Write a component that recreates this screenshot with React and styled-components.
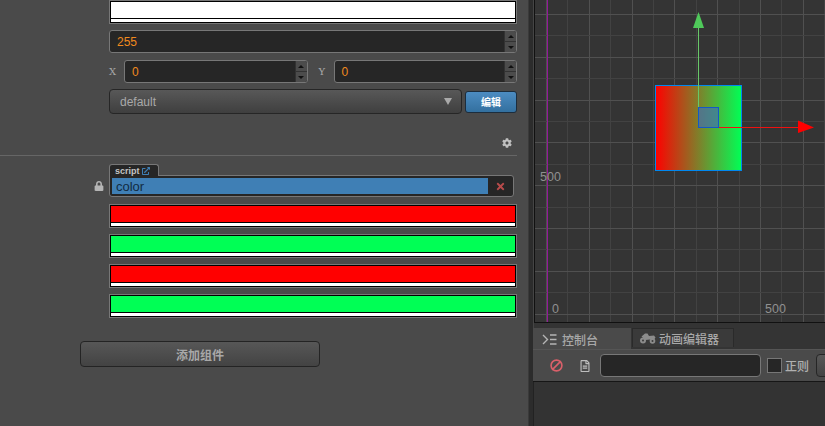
import React from 'react';
import styled, { createGlobalStyle } from 'styled-components';
import { FaCog, FaLock, FaTimes, FaExternalLinkAlt, FaRegFileAlt } from 'react-icons/fa';
import { Ban } from 'lucide-react';

const GlobalStyle = createGlobalStyle`
  html, body {
    margin: 0;
    padding: 0;
    background: #333;
    overflow: hidden;
  }
  body {
    font-family: "Liberation Sans", "Noto Sans CJK SC", sans-serif;
    font-size: 12px;
  }
`;

const Window = styled.div`
  display: flex;
  width: 825px;
  height: 426px;
  overflow: hidden;
`;

const Inspector = styled.div`
  width: 528px;
  height: 426px;
  flex: none;
  background: #4a4a4a;
  border-right: 1px solid #3a3a3a;
  display: flex;
  flex-direction: column;
`;

const Splitter = styled.div`
  width: 5px;
  flex: none;
  background: #2c2c2c;
  border-right: 1px solid #454545;
  box-sizing: border-box;
`;

const RightColumn = styled.div`
  flex: 1;
  min-width: 0;
  display: flex;
  flex-direction: column;
  background: #343434;
`;

const Props = styled.div`
  padding-left: 109px;
  width: 408px;
  display: flex;
  flex-direction: column;
`;

const Swatch = styled.div`
  box-sizing: border-box;
  width: 408px;
  height: 24px;
  border: 1px solid #777;
  background: #fff;
  margin-bottom: ${(p) => p.$gap ?? 6}px;
  outline: 1px solid #000;
  outline-offset: -2px;
  position: relative;
  &::before {
    content: '';
    display: block;
    height: 16px;
    margin: 1px 1px 0;
    background: ${(p) => p.$color};
    border-bottom: 1px solid #000;
  }
`;

const NumberBox = styled.div`
  box-sizing: border-box;
  flex: 1;
  height: 23px;
  display: flex;
  align-items: center;
  justify-content: space-between;
  background: #262626;
  border: 1px solid #777;
  border-radius: 3px;
  color: #f08a1e;
  font-size: 12px;
  padding-left: 7px;
  overflow: hidden;
`;

const Spinner = styled.div`
  width: 11px;
  height: 100%;
  flex: none;
  display: flex;
  flex-direction: column;
  background: #4c4c4c;
  border-left: 1px solid #333;
`;

const SpinPart = styled.div`
  flex: 1;
  display: flex;
  align-items: center;
  justify-content: center;
  &:first-child {
    border-bottom: 1px solid #333;
  }
  &::after {
    content: '';
    border-left: 3px solid transparent;
    border-right: 3px solid transparent;
    ${(p) => (p.$up ? 'border-bottom: 3px solid #111;' : 'border-top: 3px solid #111;')}
  }
`;

const NumberRow = styled.div`
  display: flex;
  align-items: center;
  height: 23px;
  margin-bottom: ${(p) => p.$gap}px;
`;

const AxisLabel = styled.span`
  width: 15px;
  flex: none;
  color: #a8a8a8;
  font-family: "DejaVu Serif", serif;
  font-size: 10px;
  margin-left: ${(p) => p.$left || 0}px;
`;

const SelectRow = styled.div`
  display: flex;
  align-items: center;
  gap: 3px;
  height: 25px;
`;

const Select = styled.div`
  box-sizing: border-box;
  width: 353px;
  height: 25px;
  display: flex;
  align-items: center;
  justify-content: space-between;
  padding: 0 9px 0 10px;
  border: 1px solid #262626;
  border-radius: 4px;
  background: linear-gradient(#585858, #3f3f3f);
  color: #a9a9a9;
  &::after {
    content: '';
    border-left: 4.5px solid transparent;
    border-right: 4.5px solid transparent;
    border-top: 7px solid #a9a9a9;
  }
`;

const EditButton = styled.button`
  box-sizing: border-box;
  width: 52px;
  height: 22px;
  padding: 0;
  border: 1px solid #1c2d3d;
  border-radius: 3px;
  background: linear-gradient(#4c8cc2, #33709f);
  color: #fff;
  font-family: inherit;
  font-size: 10px;
  font-weight: bold;
`;

const GearRow = styled.div`
  height: 16px;
  margin-top: 21px;
  width: 517px;
  display: flex;
  justify-content: flex-end;
  align-items: center;
  padding-right: 5px;
  box-sizing: border-box;
  color: #c0c0c0;
  font-size: 10px;
`;

const Divider = styled.div`
  width: 517px;
  height: 1px;
  margin-top: 4px;
  background: #666;
`;

const ScriptRow = styled.div`
  display: flex;
  margin-top: 8px;
  height: 33px;
  margin-bottom: 7px;
`;

const LockCell = styled.div`
  width: 109px;
  flex: none;
  display: flex;
  justify-content: flex-end;
  align-items: flex-start;
  padding: 17px 5px 0 0;
  box-sizing: border-box;
  color: #b5b5b5;
  font-size: 10px;
`;

const ScriptField = styled.div`
  width: 405px;
  display: flex;
  flex-direction: column;
`;

const ScriptTab = styled.div`
  box-sizing: border-box;
  width: 50px;
  height: 12px;
  display: flex;
  align-items: center;
  gap: 2px;
  padding-left: 5px;
  background: #262626;
  border: 1px solid #777;
  border-bottom: none;
  border-radius: 3px 3px 0 0;
  color: #c4c4c4;
  font-size: 9px;
  font-weight: bold;
  margin-bottom: -1px;
  position: relative;
  z-index: 1;
  svg {
    color: #3f7fb5;
    font-size: 8px;
  }
`;

const ScriptValue = styled.div`
  box-sizing: border-box;
  height: 22px;
  display: flex;
  align-items: stretch;
  padding: 2px 0 2px 2px;
  background: #262626;
  border: 1px solid #777;
  border-radius: 0 3px 3px 3px;
`;

const ScriptName = styled.div`
  width: 376px;
  display: flex;
  align-items: center;
  padding-left: 4px;
  box-sizing: border-box;
  background: #3f7fb5;
  color: #122c42;
  font-size: 13px;
`;

const ClearCell = styled.div`
  flex: 1;
  display: flex;
  align-items: center;
  justify-content: center;
  color: #b84b4b;
  font-size: 11px;
`;

const AddButton = styled.button`
  box-sizing: border-box;
  width: 240px;
  height: 26px;
  margin: 23px 0 0 80px;
  padding: 0;
  border: 1px solid #242424;
  border-radius: 4px;
  background: linear-gradient(#575757, #434343);
  color: #a8a8a8;
  font-family: inherit;
  font-size: 12px;
  font-weight: bold;
`;

const Scene = styled.div`
  height: 323px;
  flex: none;
  border-left: 1px solid #111;
  border-bottom: 1px solid #111;
  box-sizing: border-box;
  background: #343434;
  svg {
    display: block;
  }
`;

const SceneLabel = styled.text`
  fill: #909090;
  font-family: "Liberation Sans", sans-serif;
  font-size: 12.5px;
`;

const TabBar = styled.div`
  display: flex;
  align-items: flex-start;
  gap: 1px;
  height: 21px;
  margin-top: 5px;
  margin-left: -1px;
`;

const Tab = styled.div`
  box-sizing: border-box;
  display: flex;
  align-items: center;
  gap: ${(p) => p.$gap}px;
  width: ${(p) => p.$width}px;
  height: ${(p) => (p.$active ? 21 : 19)}px;
  padding-left: ${(p) => (p.$active ? 8 : 7)}px;
  background: ${(p) => (p.$active ? '#4a4a4a' : '#3a3a3a')};
  border: 1px solid ${(p) => (p.$active ? '#4a4a4a' : '#2a2a2a')};
  border-bottom: none;
  color: #a8a8a8;
  font-size: 12px;
  font-weight: 500;
`;

const ConsoleBar = styled.div`
  height: 33px;
  flex: none;
  display: flex;
  align-items: center;
  background: #4a4a4a;
  border-bottom: 1px solid #161616;
  box-sizing: border-box;
  margin-left: -1px;
  border-top: 1px solid #555;
  padding-left: 17px;
  white-space: nowrap;
`;

const IconSlot = styled.div`
  width: ${(p) => p.$width}px;
  flex: none;
  display: flex;
  align-items: center;
  color: ${(p) => p.$color};
`;

const BanIcon = styled(Ban)`
  transform: scaleX(-1);
`;

const FilterInput = styled.div`
  box-sizing: border-box;
  width: 161px;
  height: 23px;
  flex: none;
  background: #262626;
  border: 1px solid #777;
  border-radius: 4px;
`;

const CheckBox = styled.div`
  box-sizing: border-box;
  width: 15px;
  height: 15px;
  flex: none;
  margin: 0 3px 0 6px;
  background: #262626;
  border: 1px solid #777;
`;

const CheckLabel = styled.span`
  color: #b0b0b0;
  font-size: 12px;
  font-weight: 500;
  width: 31px;
  flex: none;
`;

const ClearButton = styled.div`
  box-sizing: border-box;
  width: 40px;
  height: 23px;
  flex: none;
  border: 1px solid #262626;
  border-radius: 4px;
  background: linear-gradient(#585858, #434343);
`;

const ConsoleBody = styled.div`
  flex: 1;
  margin-left: -1px;
  background: #333;
  border-left: 1px solid #222;
`;

const Spin = () => (
  <Spinner>
    <SpinPart $up />
    <SpinPart />
  </Spinner>
);

const range = (n) => Array.from({ length: n }, (_, i) => i);

function SceneView() {
  const W = 290;
  const H = 322;
  // minor step is 21.4px, every second line is brighter
  const vLines = range(14).map((i) => ({ x: Math.round(546 + i * 21.4) + 0.5, major: i % 2 === 0 }));
  const hLines = range(16).map((i) => ({ y: Math.round(14 + i * 21.4) + 0.5, major: i % 2 === 0 }));
  return (
    <svg width={W} height={H} viewBox={`535 0 ${W} ${H}`}>
      <defs>
        <linearGradient id="sprite">
          <stop offset="0" stopColor="#ff0000" />
          <stop offset="1" stopColor="#00ff55" />
        </linearGradient>
      </defs>
      <g shapeRendering="crispEdges">
        {vLines.map((l) => (
          <line key={l.x} x1={l.x} x2={l.x} y1={0} y2={H} stroke={l.major ? '#505050' : '#424242'} />
        ))}
        {hLines.map((l) => (
          <line key={l.y} x1={535} x2={825} y1={l.y} y2={l.y} stroke={l.major ? '#505050' : '#424242'} />
        ))}
        <line x1={547.5} x2={547.5} y1={0} y2={H} stroke="#95179a" />
        <rect x={655.5} y={85.5} width={86} height={85} fill="url(#sprite)" stroke="#0088f0" />
        <rect x={698.5} y={107.5} width={20} height={20} fill="#3f6fb8" fillOpacity="0.65" stroke="#1458c8" />
        <line x1={698.5} x2={698.5} y1={28} y2={107} stroke="#68c868" />
        <line x1={719} x2={799} y1={127.5} y2={127.5} stroke="#f01010" />
      </g>
      <polygon points="698.5,12 704,28 693,28" fill="#4fc95a" />
      <polygon points="798,120.5 814,127.5 798,133" fill="#ff0000" />
      <SceneLabel x={540} y={181}>500</SceneLabel>
      <SceneLabel x={552} y={313}>0</SceneLabel>
      <SceneLabel x={765} y={313}>500</SceneLabel>
    </svg>
  );
}

const ConsoleIcon = () => (
  <svg width="15" height="11" viewBox="0 0 15 11" fill="none" stroke="#b5b5b5" strokeWidth="1.4">
    <path d="M1 1l4.5 4.5L1 10" />
    <path d="M8 1h6.5M8 5.5h6.5M8 10h6.5" />
  </svg>
);

const AnimIcon = () => (
  <svg width="16" height="11" viewBox="0 0 16 11" fill="#8c8c8c">
    <circle cx="3" cy="7.5" r="3" />
    <circle cx="12.5" cy="8" r="2.8" />
    <path d="M1.5 3.5L5 .5h2.5l1.5 2.5 5-.5 1.5 2-1 1.5-9 1z" />
    <circle cx="3" cy="7.5" r="1" fill="#3a3a3a" />
    <circle cx="12.5" cy="8" r="1" fill="#3a3a3a" />
  </svg>
);

export default function App() {
  return (
    <Window>
      <GlobalStyle />
      <Inspector>
        <Props>
          <Swatch $color="#ffffff" />
          <NumberRow $gap={7}>
            <NumberBox>
              255
              <Spin />
            </NumberBox>
          </NumberRow>
          <NumberRow $gap={6}>
            <AxisLabel>X</AxisLabel>
            <NumberBox>
              0
              <Spin />
            </NumberBox>
            <AxisLabel $left={11}>Y</AxisLabel>
            <NumberBox>
              0
              <Spin />
            </NumberBox>
          </NumberRow>
          <SelectRow>
            <Select>default</Select>
            <EditButton>编辑</EditButton>
          </SelectRow>
        </Props>
        <GearRow>
          <FaCog />
        </GearRow>
        <Divider />
        <ScriptRow>
          <LockCell>
            <FaLock />
          </LockCell>
          <ScriptField>
            <ScriptTab>
              script
              <FaExternalLinkAlt />
            </ScriptTab>
            <ScriptValue>
              <ScriptName>color</ScriptName>
              <ClearCell>
                <FaTimes />
              </ClearCell>
            </ScriptValue>
          </ScriptField>
        </ScriptRow>
        <Props>
          <Swatch $color="#ff0000" />
          <Swatch $color="#00ff55" />
          <Swatch $color="#ff0000" />
          <Swatch $color="#00ff55" $gap={0} />
        </Props>
        <AddButton>添加组件</AddButton>
      </Inspector>
      <Splitter />
      <RightColumn>
        <Scene>
          <SceneView />
        </Scene>
        <TabBar>
          <Tab $active $width={98} $gap={5}>
            <ConsoleIcon />
            控制台
          </Tab>
          <Tab $width={102} $gap={3}>
            <AnimIcon />
            动画编辑器
          </Tab>
        </TabBar>
        <ConsoleBar>
          <IconSlot $width={29} $color="#d9606a">
            <BanIcon size={13} strokeWidth={3} />
          </IconSlot>
          <IconSlot $width={21} $color="#bdbdbd">
            <FaRegFileAlt size={12} />
          </IconSlot>
          <FilterInput />
          <CheckBox />
          <CheckLabel>正则</CheckLabel>
          <ClearButton />
        </ConsoleBar>
        <ConsoleBody />
      </RightColumn>
    </Window>
  );
}
